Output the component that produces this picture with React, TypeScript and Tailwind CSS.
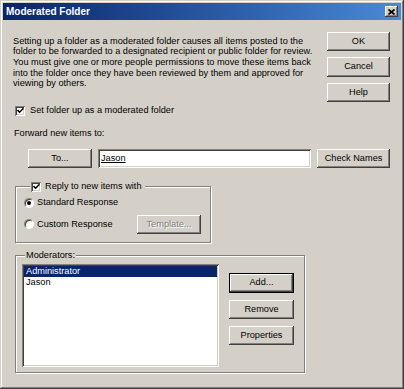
import React from "react";

const raised =
  "bg-[#d4d0c8] shadow-[inset_-1px_-1px_0_#404040,inset_1px_1px_0_#ffffff,inset_-2px_-2px_0_#808080,inset_2px_2px_0_#d4d0c8]";
const sunken =
  "bg-white shadow-[inset_1px_1px_0_#808080,inset_-1px_-1px_0_#ffffff,inset_2px_2px_0_#404040,inset_-2px_-2px_0_#d4d0c8]";

const Button = ({ label, className = "", disabled = false }: { label: string; className?: string; disabled?: boolean }) => (
  <button
    type="button"
    className={`${raised} flex items-center justify-center ${
      disabled ? "text-[#808080] [text-shadow:1px_1px_0_#ffffff]" : "text-black"
    } ${className}`}
  >
    {label}
  </button>
);

const CheckBox = () => (
  <span className={`${sunken} w-[10px] h-[10px] flex items-center justify-center shrink-0`}>
    <svg width="7" height="7" viewBox="0 0 7 7">
      <path d="M0.5 3 L2.6 5.2 L6.5 1.2" fill="none" stroke="#000" strokeWidth="1.6" />
    </svg>
  </span>
);

const Radio = ({ checked }: { checked?: boolean }) => (
  <span className="w-[10px] h-[10px] rounded-full bg-white border border-t-[#808080] border-l-[#808080] border-b-[#ffffff] border-r-[#ffffff] flex items-center justify-center shrink-0 shadow-[inset_1px_1px_0_#404040]">
    {checked && <span className="w-[4px] h-[4px] rounded-full bg-black" />}
  </span>
);

export default function App() {
  return (
    <div className="w-[404px] h-[389px] p-[3px] bg-[#d4d0c8] flex flex-col font-['Liberation_Sans',Arial,sans-serif] text-[9.2px] text-black shadow-[inset_-1px_-1px_0_#404040,inset_1px_1px_0_#d4d0c8,inset_-2px_-2px_0_#808080,inset_2px_2px_0_#ffffff]">
      {/* title bar */}
      <div className="h-[17px] flex items-center justify-between pl-[3px] pr-[3px] bg-gradient-to-r from-[#0a246a] to-[#4a8ad8]">
        <span className="text-white font-bold text-[10px]">Moderated Folder</span>
        <span className={`${raised} w-[13px] h-[11px] flex items-center justify-center`}>
          <svg width="7" height="6" viewBox="0 0 7 6">
            <path d="M0.5 0.5 L6.5 5.5 M6.5 0.5 L0.5 5.5" stroke="#000" strokeWidth="1.7" />
          </svg>
        </span>
      </div>

      <div className="pl-[10px] pr-[11px]">
        <div className="flex justify-between">
          <div className="pt-[15.5px]">
            <p className="leading-[10.7px]">
              Setting up a folder as a moderated folder causes all items posted to the
              <br />
              folder to be forwarded to a designated recipient or public folder for review.
              <br />
              You must give one or more people permissions to move these items back
              <br />
              into the folder once they have been reviewed by them and approved for
              <br />
              viewing by others.
            </p>
            <label className="mt-[16px] ml-[2px] h-[11px] flex items-center gap-[5px]">
              <CheckBox />
              <span>Set folder up as a moderated folder</span>
            </label>
          </div>
          <div className="pt-[12px] flex flex-col gap-[6px] w-[63px]">
            <Button label="OK" className="h-[19px]" />
            <Button label="Cancel" className="h-[20px]" />
            <Button label="Help" className="h-[19px]" />
          </div>
        </div>

        <p className="mt-[11.5px] ml-[1px] leading-[10.7px]">Forward new items to:</p>

        <div className="mt-[10.7px] pl-[15px] flex gap-[6px] h-[19px]">
          <Button label="To..." className="w-[64px]" />
          <div className={`${sunken} w-[213px] flex items-center pl-[3px]`}>
            <span className="underline">Jason</span>
          </div>
          <Button label="Check Names" className="w-[73px]" />
        </div>

        <fieldset className="mt-[13.5px] ml-[2px] w-[196px] h-[62px] border border-[#808080] shadow-[1px_1px_0_#ffffff,inset_1px_1px_0_#ffffff] pl-[8px]">
          <legend className="ml-[6px] px-[1px] bg-[#d4d0c8]">
            <span className="flex items-center gap-[4px] h-[11px]">
              <CheckBox />
              <span className="pr-[2px]">Reply to new items with</span>
            </span>
          </legend>
          <div className="mt-[5px] h-[11px] flex items-center gap-[3px]">
            <Radio checked />
            <span>Standard Response</span>
          </div>
          <div className="mt-[6.5px] flex items-center">
            <Radio />
            <span className="ml-[3px] w-[100px]">Custom Response</span>
            <Button label="Template..." disabled className="w-[64px] h-[19px]" />
          </div>
        </fieldset>

        <fieldset className="mt-[6.6px] ml-[2px] w-[290px] border border-[#808080] shadow-[1px_1px_0_#ffffff,inset_1px_1px_0_#ffffff] pl-[6px] pb-[5px]">
          <legend className="ml-[3px] px-[1px] bg-[#d4d0c8] leading-[10.7px]">Moderators:</legend>
          <div className="mt-[3.7px] flex gap-[10px]">
            <div className={`${sunken} w-[197px] h-[103px] p-[2px] flex flex-col`}>
              <div className="h-[11px] bg-[#0a246a] text-white flex items-center pl-[2px]">Administrator</div>
              <div className="h-[11px] flex items-center pl-[2px]">Jason</div>
            </div>
            <div className="mt-[9px] flex flex-col gap-[7px]">
              <Button label="Add..." className="w-[65px] h-[20px] border border-black" />
              <Button label="Remove" className="w-[65px] h-[19px]" />
              <Button label="Properties" className="w-[65px] h-[19px]" />
            </div>
          </div>
        </fieldset>
      </div>
    </div>
  );
}
